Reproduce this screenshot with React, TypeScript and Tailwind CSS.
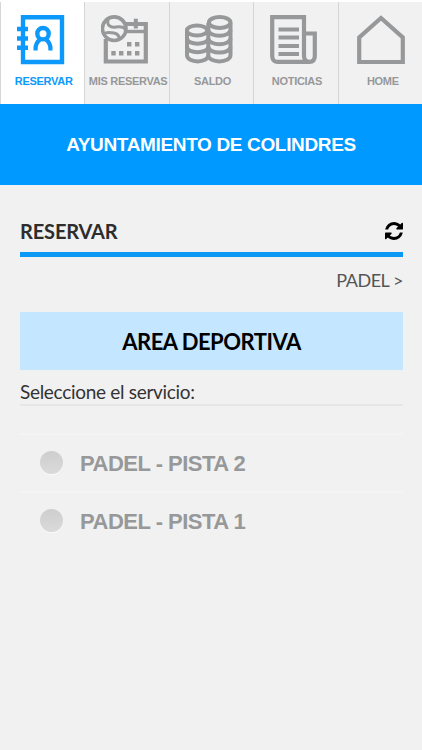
import { useState } from 'react';
import type { ReactNode } from 'react';

interface Tab {
  id: string;
  label: string;
  labelClass: string;
  icon: ReactNode;
}

function AgendaIcon() {
  return (
    <svg width="48" height="50" viewBox="0 0 48 50" fill="none" stroke="currentColor">
      <path d="M6 2.2H45V47H6Z" strokeWidth="4.4" />
      <path d="M0 14H11M0 23.5H11M0 32.8H11" strokeWidth="4.4" />
      <circle cx="26" cy="18.7" r="5.7" strokeWidth="4.4" />
      <path
        d="M16.5 33.3H18.6C18.6 28.5 20.5 26.5 23 24.5M35.5 33.3H33.4C33.4 28.5 31.5 26.5 29 24.5"
        strokeWidth="4.2"
      />
    </svg>
  );
}

function BookingsIcon() {
  return (
    <svg width="48" height="50" viewBox="0 0 48 50" fill="none" stroke="currentColor">
      <path d="M4.8 24V46.5H44.8V9H24" strokeWidth="4.2" />
      <path d="M25 16.5H44" strokeWidth="3.4" />
      <path d="M34.8 3.7V13.5" strokeWidth="4" />
      <circle cx="13.2" cy="13.7" r="11.8" strokeWidth="3.6" />
      <path
        d="M7 4.5C5.5 10 9 13 15 12C19 11.3 22.5 11.5 24.5 14.5M2.5 19C5 16.8 9 17.2 13 18C17 18.8 18.5 20.5 18 24.5"
        strokeWidth="3"
      />
      <path
        d="M26 29.3H30.4M34 29.3H38.4M10.3 38.3H14.7M18 38.3H22.4M26 38.3H30.4M34 38.3H38.4"
        strokeWidth="4.4"
      />
    </svg>
  );
}

function CoinsIcon() {
  return (
    <svg width="48" height="50" viewBox="0 0 48 50" fill="none" stroke="currentColor" strokeWidth="4">
      <ellipse cx="12" cy="15.5" rx="10.3" ry="5" />
      <ellipse cx="34.7" cy="7.5" rx="10.8" ry="5.5" />
      <path d="M2 15.5V40C2 48.5 23.3 48.5 23.3 40V8M45.5 8V40C45.5 48.5 23.3 48.5 23.3 40" />
      <path d="M2 23.5C2.5 30.5 22.5 30.5 23.3 23.5M2 32C2.5 39 22.5 39 23.3 32" />
      <path d="M23.3 15C24 22.5 45 22.5 45.5 15M23.3 23.5C24 31 45 31 45.5 23.5M23.3 32C24 39.3 45 39.3 45.5 32" />
    </svg>
  );
}

function NewsIcon() {
  return (
    <svg width="48" height="50" viewBox="0 0 48 50" fill="none" stroke="currentColor" strokeWidth="4.2">
      <path d="M34 18.5H44.8V41C44.8 44.5 43 46.8 39.5 46.8H7C4 46.8 2.2 44.5 2.2 41V2.2H34V41C34 44.5 36 46.8 39.5 46.8" />
      <path d="M8.5 14.5H29M8.5 22.5H29M8.5 31H29M8.5 39H29" />
    </svg>
  );
}

function HomeIcon() {
  return (
    <svg width="48" height="50" viewBox="0 0 48 50" fill="none" stroke="currentColor" strokeWidth="4.2">
      <path d="M2.2 47V22.5L24 3L45.8 22.5V47Z" />
    </svg>
  );
}

function RefreshIcon() {
  return (
    <svg width="18" height="18" viewBox="0 128 1536 1536" fill="currentColor">
      <path d="M1511 1056q0 5-1 7q-64 268-268 434.5t-478 166.5q-146 0-282.5-55t-243.5-157l-129 129q-19 19-45 19t-45-19t-19-45v-448q0-26 19-45t45-19h448q26 0 45 19t19 45t-19 45l-137 137q71 66 161 102t187 36q134 0 250-65t186-179q11-17 53-117q8-23 30-23h192q13 0 22.5 9.5t9.5 22.5zM1536 256v448q0 26-19 45t-45 19h-448q-26 0-45-19t-19-45t19-45l138-138q-148-137-349-137q-134 0-250 65t-186 179q-11 17-53 117q-8 23-30 23h-199q-13 0-22.5-9.5t-9.5-22.5v-7q65-268 270-434.5t480-166.5q146 0 284 55.5t245 156.5l130-129q19-19 45-19t45 19t19 45z" />
    </svg>
  );
}

const tabs: Tab[] = [
  { id: 'reservar', label: 'RESERVAR', labelClass: 'pl-[2px]', icon: <AgendaIcon /> },
  { id: 'mis-reservas', label: 'MIS RESERVAS', labelClass: 'pl-[2px]', icon: <BookingsIcon /> },
  { id: 'saldo', label: 'SALDO', labelClass: 'pl-[2px]', icon: <CoinsIcon /> },
  { id: 'noticias', label: 'NOTICIAS', labelClass: 'pl-[2px]', icon: <NewsIcon /> },
  { id: 'home', label: 'HOME', labelClass: 'pl-[5px]', icon: <HomeIcon /> },
];

const services = ['PADEL - PISTA 2', 'PADEL - PISTA 1'];

export default function App() {
  const [activeTab, setActiveTab] = useState('reservar');
  const [service, setService] = useState('');

  return (
    <div className="w-full h-screen flex flex-col overflow-hidden bg-[#f1f1f1] font-['Liberation_Sans',Arial,sans-serif]">
      <nav className="grid grid-cols-5 h-[104px] shrink-0 border-t-2 border-white">
        {tabs.map((tab) => (
          <button
            key={tab.id}
            className={`flex flex-col items-center pt-[13px] border-l border-[#d6d6d6] ${
              tab.id === activeTab ? 'bg-white text-[#0c99fb]' : 'text-[#979899]'
            }`}
            onClick={() => setActiveTab(tab.id)}
          >
            <span className={tab.id === 'home' ? 'pl-px' : 'pr-[4px]'}>{tab.icon}</span>
            <span
              className={`mt-[9px] text-[11px] leading-[14px] font-bold tracking-[-0.3px] whitespace-nowrap ${tab.labelClass}`}
            >
              {tab.label}
            </span>
          </button>
        ))}
      </nav>

      <header className="h-[81px] shrink-0 flex items-center justify-center bg-[#0099ff]">
        <h1 className="text-white text-[19px] leading-6 font-bold tracking-[-0.35px]">
          AYUNTAMIENTO DE COLINDRES
        </h1>
      </header>

      <main className="pl-5 pr-[19px] pt-[26px] font-[Lato,sans-serif]">
        <div className="flex items-center justify-between h-[39px] pb-[2px] border-b-[5px] border-[#0c99f5] box-content">
          <h2 className="text-[20px] font-bold tracking-[-0.15px] text-[#2d2d2d]">RESERVAR</h2>
          <button className="text-black" onClick={() => setService('')}>
            <RefreshIcon />
          </button>
        </div>

        <div className="mt-[11px] text-right text-[18px] leading-6 tracking-[-0.45px] text-[#555]">
          PADEL &gt;
        </div>

        <div className="mt-[20px] h-[58px] flex items-center justify-center bg-[#c4e7ff] text-[22px] font-bold tracking-[-0.5px] text-black">
          AREA DEPORTIVA
        </div>

        <p className="mt-[9px] h-[27px] border-b-2 border-[#e6e6e6] text-[19px] leading-[26px] tracking-[-0.3px] text-[#333]">
          Seleccione el servicio:
        </p>

        <ul className="mt-[27px] font-['Liberation_Sans',Arial,sans-serif]">
          {services.map((name) => (
            <li key={name} className="h-[58px] border-t-2 border-[#f4f4f4]">
              <button className="flex items-center h-full pl-5 pb-px" onClick={() => setService(name)}>
                <span
                  className={`size-[23px] rounded-full bg-linear-to-b shadow-[0_1px_1px_#fafafa] ${
                    service === name ? 'from-[#0099ff] to-[#0c99f5]' : 'from-[#cecece] to-[#dadada]'
                  }`}
                />
                <span className="ml-[17px] pt-[2px] text-[22px] font-bold tracking-[-0.5px] text-[#979899]">
                  {name}
                </span>
              </button>
            </li>
          ))}
        </ul>
      </main>
    </div>
  );
}
